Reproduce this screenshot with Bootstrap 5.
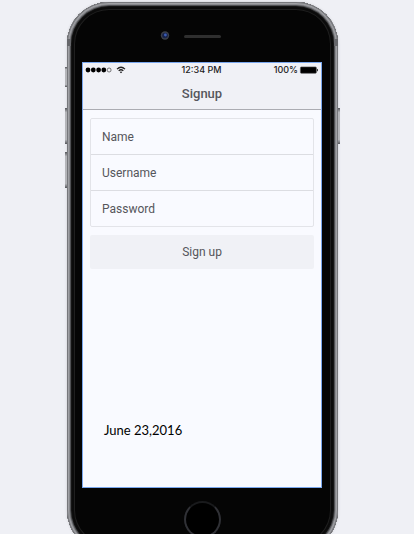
<!DOCTYPE html>
<html lang="en">
<head>
<meta charset="utf-8">
<meta name="viewport" content="width=device-width, initial-scale=1">
<title>Signup</title>
<link href="https://cdn.jsdelivr.net/npm/bootstrap@5.3.0/dist/css/bootstrap.min.css" rel="stylesheet">
<style>
  body { background: #eff0f5; font-family: Roboto, "Liberation Sans", sans-serif; color: #4d4e54; font-size: 12px; }
  .stage { height: 100vh; padding: 2px 9px 0 0; }
  .phone {
    width: 100%; max-width: 271px; padding: 0 16px 0 15px; border-radius: 42px; background: #050505;
    box-shadow: inset 0 0 0 1px #77787c, inset 0 0 0 2px #a0a1a5, inset 0 0 0 3px #88898d,
      inset 0 0 0 4px #505154, inset 0 0 0 5px #151515, inset 0 0 0 7px #0b0b0b, inset 0 0 0 8px #1f1f1f,
      0 0 3px #c8c9cf;
  }
  .side-key { width: 2px; height: 36px; background: linear-gradient(#55565a, #b4b5b9 12%, #b4b5b9 88%, #55565a); }
  .key-mute { left: -2px; top: 65px; height: 20px; }
  .key-up { left: -2px; top: 106px; }
  .key-down { left: -2px; top: 150px; }
  .key-power { right: -2px; top: 106px; }
  .antenna { width: 4px; height: 7px; top: 37px; background: #66676b; }
  .antenna-left { left: 0; }
  .antenna-right { right: 0; }
  .top-bezel { height: 60px; padding-top: 28px; gap: 14px; padding-right: 22px; }
  .display { min-height: 426px; background: #f9faff; border: 1px solid #7aa7ee; }
  .bars { background: #f0f1f6; border-bottom: 1px solid #abacb2; }
  .status { height: 14px; font: 500 9px/14px Inter, sans-serif; color: #222; padding: 0 3px 0 2px; }
  .app-title { font-size: 13px; line-height: 32px; font-weight: 500; color: #55565b; padding-top: 1px; height: 32px; }
  .app-form { padding: 8px 7px 0; }
  .fields { border: 1px solid #e3e4e9; border-radius: 2px; }
  .fields .form-control { height: 36px; padding: 0 11px; font-size: 12px; color: #55565b; background: transparent; border: 0; border-bottom: 1px solid #dcdde2; border-radius: 0; }
  .fields .form-control:last-child { height: 35px; border-bottom: 0; }
  .fields .form-control::placeholder { color: #55565b; opacity: 1; }
  .btn-signup { height: 34px; margin-top: 8px; padding: 0; font-size: 12px; color: #55565b; background: #f0f1f6; border: 0; border-radius: 2px; }
  .date-note { padding: 0 21px 48px; font: 13px/18px Lato, sans-serif; color: #000; }
  .home-key { width: 37px; height: 37px; margin: 13px auto 14px; padding: 0; background: #000; border: 2px solid #303136; border-top-color: #191a1c; border-radius: 50%; }
</style>
<script src="https://cdn.jsdelivr.net/npm/bootstrap@5.3.0/dist/js/bootstrap.bundle.min.js"></script>
</head>
<body>
<div class="stage d-flex justify-content-center align-items-start overflow-hidden">
  <div class="phone position-relative">
    <span class="side-key key-mute position-absolute"></span>
    <span class="side-key key-up position-absolute"></span>
    <span class="side-key key-down position-absolute"></span>
    <span class="side-key key-power position-absolute"></span>
    <span class="antenna antenna-left position-absolute"></span>
    <span class="antenna antenna-right position-absolute"></span>
    <div class="top-bezel d-flex justify-content-center align-items-start">
      <svg width="10" height="11" viewBox="0 0 10 11" aria-hidden="true"><circle cx="5" cy="5.5" r="4.2" fill="#3b3f48"/><circle cx="5" cy="5.5" r="2.8" fill="#182348"/><circle cx="5.4" cy="5" r="1.4" fill="#3a5cb5"/></svg>
      <svg width="38" height="11" viewBox="0 0 38 11" aria-hidden="true"><rect x="0" y="5" width="37" height="3" rx="1.5" fill="#2f2f2f"/></svg>
    </div>
    <main class="display d-flex flex-column">
      <header class="bars">
        <div class="status row g-0">
          <div class="col d-flex align-items-center gap-1">
            <svg width="27" height="6" viewBox="0 0 27 6" aria-hidden="true"><g fill="#000"><circle cx="3" cy="3" r="2.4"/><circle cx="8.3" cy="3" r="2.4"/><circle cx="13.6" cy="3" r="2.4"/><circle cx="18.8" cy="3" r="2.4"/></g><circle cx="24.1" cy="3" r="2" fill="none" stroke="#444" stroke-width=".7"/></svg>
            <svg width="10" height="8" viewBox="0 0 10 8" aria-hidden="true"><g fill="none" stroke="#222" stroke-width="1.3"><path d="M1 3.1Q5-.7 9 3.1M2.7 4.9Q5 2.7 7.3 4.9"/></g><path d="M3.8 5.9Q5 4.9 6.2 5.9L5 7.3z" fill="#111"/></svg>
          </div>
          <div class="col-auto">12:34 PM</div>
          <div class="col d-flex justify-content-end align-items-center">
            <span>100%</span>
            <svg width="20" height="8" viewBox="0 0 20 8" aria-hidden="true"><rect x="2.4" y=".9" width="16" height="6.4" rx="1" fill="#000" stroke="#555" stroke-width=".6"/><path d="M19 2.7q1 .3 1 1.4t-1 1.4z" fill="#222"/></svg>
          </div>
        </div>
        <h1 class="app-title text-center m-0">Signup</h1>
      </header>
      <form class="app-form">
        <div class="fields">
          <input class="form-control" type="text" placeholder="Name" aria-label="Name">
          <input class="form-control" type="text" placeholder="Username" aria-label="Username">
          <input class="form-control" type="password" placeholder="Password" aria-label="Password">
        </div>
        <button class="btn btn-signup w-100" type="button">Sign up</button>
      </form>
      <div class="date-note mt-auto">June 23,2016</div>
    </main>
    <button class="home-key d-block" type="button" aria-label="Home"></button>
  </div>
</div>
</body>
</html>
